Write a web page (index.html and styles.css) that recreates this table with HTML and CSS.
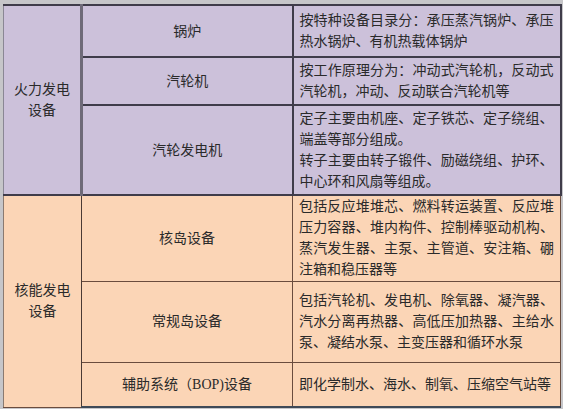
FILE: index.html
```html
<!DOCTYPE html>
<html lang="zh">
<head>
<meta charset="utf-8">
<link rel="stylesheet" href="styles.css">
</head>
<body>
<table class="eq">
  <colgroup>
    <col class="c1">
    <col class="c2">
    <col class="c3">
  </colgroup>
  <tbody class="fire">
    <tr class="r1">
      <td class="cat" rowspan="3">火力发电<br>设备</td>
      <td class="name">锅炉</td>
      <td class="desc">按特种设备目录分：承压蒸汽锅炉、承压热水锅炉、有机热载体锅炉</td>
    </tr>
    <tr class="r2">
      <td class="name">汽轮机</td>
      <td class="desc">按工作原理分为：冲动式汽轮机，反动式汽轮机，冲动、反动联合汽轮机等</td>
    </tr>
    <tr class="r3">
      <td class="name">汽轮发电机</td>
      <td class="desc">定子主要由机座、定子铁芯、定子绕组、端盖等部分组成。<br>转子主要由转子锻件、励磁绕组、护环、中心环和风扇等组成。</td>
    </tr>
  </tbody>
  <tbody class="nuke">
    <tr class="r4">
      <td class="cat" rowspan="3">核能发电<br>设备</td>
      <td class="name">核岛设备</td>
      <td class="desc">包括反应堆堆芯、燃料转运装置、反应堆压力容器、堆内构件、控制棒驱动机构、蒸汽发生器、主泵、主管道、安注箱、硼注箱和稳压器等</td>
    </tr>
    <tr class="r5">
      <td class="name">常规岛设备</td>
      <td class="desc">包括汽轮机、发电机、除氧器、凝汽器、汽水分离再热器、高低压加热器、主给水泵、凝结水泵、主变压器和循环水泵</td>
    </tr>
    <tr class="r6">
      <td class="name">辅助系统（BOP)设备</td>
      <td class="desc">即化学制水、海水、制氧、压缩空气站等</td>
    </tr>
  </tbody>
</table>
</body>
</html>
```

FILE: styles.css
```css
html, body {
  margin: 0;
  padding: 0;
}
body {
  background: #c6c6c9;
  width: 563px;
  height: 409px;
  overflow: hidden;
  font-family: "Liberation Serif", "Noto Sans CJK SC", serif;
  font-size: 14px;
  color: #2a2a2a;
}
.eq {
  margin: 4px 0 0 3px;
  width: 557px;
  border-collapse: collapse;
  table-layout: fixed;
}
.c1 { width: 78px; }
.c2 { width: 211px; }
.c3 { width: 268px; }

.eq td {
  padding: 0 6px;
  line-height: 21px;
  vertical-align: middle;
}
.fire td {
  background: #ccc1da;
  border: 2px solid #3f3c4a;
}
.fire .cat {
  border-right: 3px solid #6e6a78;
  border-left: 1px solid #8a8794;
}
.nuke td {
  background: #fbd5b6;
  border: 1px solid #6a4c3e;
}
.nuke .cat {
  border-right: 1px solid #4a3a34;
  border-left: 1px solid #8a7a70;
}
.nuke tr:first-child td {
  border-top: 2px solid #8c8a92;
}
.nuke tr:last-child td {
  border-bottom: 2px solid #3f4a58;
}
.cat, .name {
  text-align: center;
  padding: 0 4px;
  line-height: 20px;
}
.desc {
  text-align: justify;
}
.fire .desc { border-right: 2px solid #3f3c4a; }
.r1 { height: 52px; }
.r2 { height: 48px; }
.r3 { height: 90px; }
.r4 { height: 86px; }
.r5 { height: 81px; }
.r6 { height: 45px; }
```
